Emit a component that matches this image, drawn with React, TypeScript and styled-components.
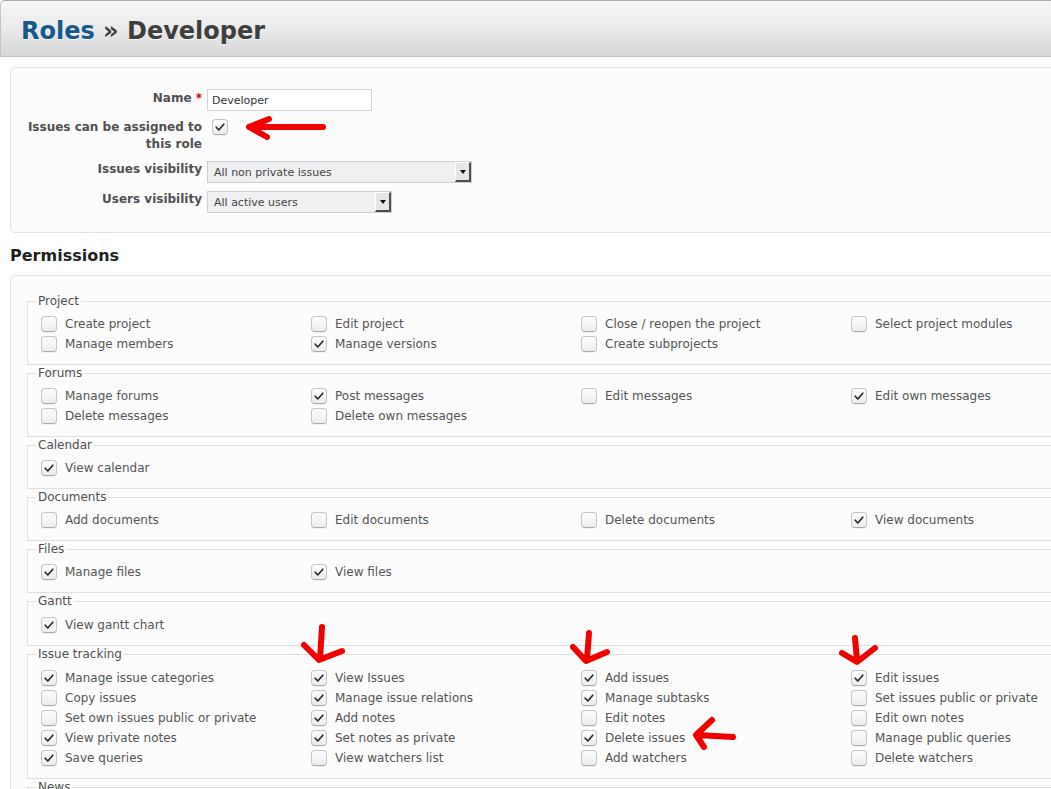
import React from "react";
import styled, { createGlobalStyle } from "styled-components";

const Global = createGlobalStyle`
  html, body { margin: 0; padding: 0; overflow: hidden; background: #fff; }
  body { font-family: "DejaVu Sans", Verdana, sans-serif; font-size: 12px; color: #505050; }
`;

const Page = styled.div`
  position: relative;
  width: 1170px;
`;

const Header = styled.div`
  box-sizing: border-box;
  height: 57px;
  display: flex;
  align-items: center;
  padding: 5px 0 0 20px;
  border-top: 1px solid #ababab;
  border-left: 1px solid #c4c4c4;
  border-bottom: 1px solid #bfcbd3;
  border-top-left-radius: 5px;
  background: linear-gradient(#f6f6f6, #ececec 45%, #d5d6d6);
`;

const Title = styled.h1`
  margin: 0;
  font-size: 24px;
  font-weight: bold;
  color: #3e3e3e;
  text-shadow: 0 1px 0 rgba(255, 255, 255, 0.7);
`;

const Crumb = styled.span`
  color: #16598a;
`;

const Box = styled.div<{ $mt: number }>`
  margin: ${(p) => p.$mt}px 0 0 10px;
  border: 1px solid #e2e2e2;
  border-radius: 5px;
  background: #fcfcfc;
`;

const FormBox = styled(Box)`
  padding: 21px 0 19px 0;
  display: grid;
  grid-template-columns: 191px 1fr;
  column-gap: 5px;
  row-gap: 8px;
`;

const Label = styled.label<{ $pt?: number }>`
  font-weight: bold;
  text-align: right;
  line-height: 17px;
  padding-top: ${(p) => p.$pt ?? 0}px;
  color: #505050;
`;

const Required = styled.span`
  color: #c40000;
`;

const TextInput = styled.input`
  box-sizing: border-box;
  width: 165px;
  height: 22px;
  border: 1px solid #d3d3d3;
  background: #fff;
  font-family: inherit;
  font-size: 11px;
  color: #333;
  padding: 0 4px;
  outline: none;
  display: block;
`;

const SelectBox = styled.div<{ $w: number }>`
  box-sizing: border-box;
  width: ${(p) => p.$w}px;
  height: 22px;
  display: flex;
  align-items: stretch;
  border: 1px solid #cdd0d3;
  background: #eef0f2;
  font-size: 11px;
  color: #444;
`;

const SelectText = styled.span`
  flex: 1;
  display: flex;
  align-items: center;
  padding-left: 6px;
`;

const SelectBtn = styled.span`
  box-sizing: border-box;
  width: 16px;
  display: flex;
  align-items: center;
  justify-content: center;
  background: #e6e6e6;
  border-top: 1px solid #fff;
  border-left: 1px solid #fff;
  border-right: 2px solid #4e4e4e;
  border-bottom: 2px solid #4e4e4e;
  &::after {
    content: "";
    border-left: 3px solid transparent;
    border-right: 3px solid transparent;
    border-top: 4px solid #111;
  }
`;

const CheckCell = styled.div`
  padding-left: 5px;
`;

const Heading = styled.h3`
  margin: 13px 0 0 10px;
  font-size: 16px;
  line-height: 20px;
  font-weight: bold;
  color: #1f1f1f;
`;

const PermBox = styled(Box)`
  padding: 18px 16px 10px 16px;
`;

const Fieldset = styled.fieldset`
  margin: 0 0 1px 0;
  padding: 6px 0 10px 8px;
  border: 1px solid #e0e0e0;
  min-width: 0;
  &:nth-of-type(n + 6) {
    padding-top: 7px;
  }
`;

const Legend = styled.legend`
  padding: 0 2px;
  font-size: 12px;
  line-height: 14px;
  color: #505050;
`;

const PermGrid = styled.div`
  display: grid;
  grid-template-columns: repeat(4, 270px);
  padding-left: 5px;
`;

const PermItem = styled.label`
  display: flex;
  align-items: center;
  height: 20px;
  gap: 8px;
  color: #555;
  white-space: nowrap;
`;

const CheckBoxEl = styled.span`
  box-sizing: border-box;
  width: 16px;
  height: 16px;
  flex: none;
  display: inline-flex;
  align-items: center;
  justify-content: center;
  border: 1px solid #c6c6c6;
  border-bottom-color: #ababab;
  border-radius: 4px;
  background: linear-gradient(#fdfdfd, #ececec);
  box-shadow: 0 1px 0 rgba(0, 0, 0, 0.06);
`;

const Overlay = styled.svg`
  position: absolute;
  left: 0;
  top: 0;
  pointer-events: none;
`;

function Check({ on }: { on: boolean }) {
  return (
    <CheckBoxEl>
      {on && (
        <svg width="12" height="12" viewBox="0 0 12 12">
          <path d="M2.2 6.2 L4.8 9 L9.8 3.2" fill="none" stroke="#262626" strokeWidth="1.6" strokeLinecap="round" strokeLinejoin="round" />
        </svg>
      )}
    </CheckBoxEl>
  );
}

type Perm = [string, boolean];
const groups: { name: string; perms: Perm[] }[] = [
  {
    name: "Project",
    perms: [
      ["Create project", false],
      ["Edit project", false],
      ["Close / reopen the project", false],
      ["Select project modules", false],
      ["Manage members", false],
      ["Manage versions", true],
      ["Create subprojects", false],
    ],
  },
  {
    name: "Forums",
    perms: [
      ["Manage forums", false],
      ["Post messages", true],
      ["Edit messages", false],
      ["Edit own messages", true],
      ["Delete messages", false],
      ["Delete own messages", false],
    ],
  },
  { name: "Calendar", perms: [["View calendar", true]] },
  {
    name: "Documents",
    perms: [
      ["Add documents", false],
      ["Edit documents", false],
      ["Delete documents", false],
      ["View documents", true],
    ],
  },
  {
    name: "Files",
    perms: [
      ["Manage files", true],
      ["View files", true],
    ],
  },
  { name: "Gantt", perms: [["View gantt chart", true]] },
  {
    name: "Issue tracking",
    perms: [
      ["Manage issue categories", true],
      ["View Issues", true],
      ["Add issues", true],
      ["Edit issues", true],
      ["Copy issues", false],
      ["Manage issue relations", true],
      ["Manage subtasks", true],
      ["Set issues public or private", false],
      ["Set own issues public or private", false],
      ["Add notes", true],
      ["Edit notes", false],
      ["Edit own notes", false],
      ["View private notes", true],
      ["Set notes as private", true],
      ["Delete issues", true],
      ["Manage public queries", false],
      ["Save queries", true],
      ["View watchers list", false],
      ["Add watchers", false],
      ["Delete watchers", false],
    ],
  },
  { name: "News", perms: [["Manage news", false], ["Comment news", true]] },
];

const arrows = [
  "M323 127 L251 127 M249 127 L269 119 M249 127 L267 137",
  "M322 627 L320 659 M304 645 L319 660 L342 651",
  "M589 633 L587 659 M573 647 L586 661 L607 652",
  "M855 638 L857 660 M842 653 L857 662 L875 648",
  "M733 737 L697 735 M696 735 L712 720 M696 735 L704 747",
];

export default function App() {
  return (
    <Page>
      <Global />
      <Header>
        <Title>
          <Crumb>Roles</Crumb> » Developer
        </Title>
      </Header>

      <FormBox $mt={10}>
        <Label $pt={1}>
          Name <Required>*</Required>
        </Label>
        <div>
          <TextInput defaultValue="Developer" />
        </div>
        <Label>
          Issues can be assigned to
          <br />
          this role
        </Label>
        <CheckCell>
          <Check on />
        </CheckCell>
        <Label $pt={0}>Issues visibility</Label>
        <div>
          <SelectBox $w={265}>
            <SelectText>All non private issues</SelectText>
            <SelectBtn />
          </SelectBox>
        </div>
        <Label $pt={0}>Users visibility</Label>
        <div>
          <SelectBox $w={185}>
            <SelectText>All active users</SelectText>
            <SelectBtn />
          </SelectBox>
        </div>
      </FormBox>

      <Heading>Permissions</Heading>

      <PermBox $mt={9}>
        {groups.map((g) => (
          <Fieldset key={g.name}>
            <Legend>{g.name}</Legend>
            <PermGrid>
              {g.perms.map(([label, on]) => (
                <PermItem key={label}>
                  <Check on={on} />
                  {label}
                </PermItem>
              ))}
            </PermGrid>
          </Fieldset>
        ))}
      </PermBox>

      <Overlay width="1051" height="789" viewBox="0 0 1051 789">
        {arrows.map((d, i) => (
          <path key={i} d={d} fill="none" stroke="#f20000" strokeWidth="6" strokeLinecap="round" strokeLinejoin="round" />
        ))}
      </Overlay>
    </Page>
  );
}
